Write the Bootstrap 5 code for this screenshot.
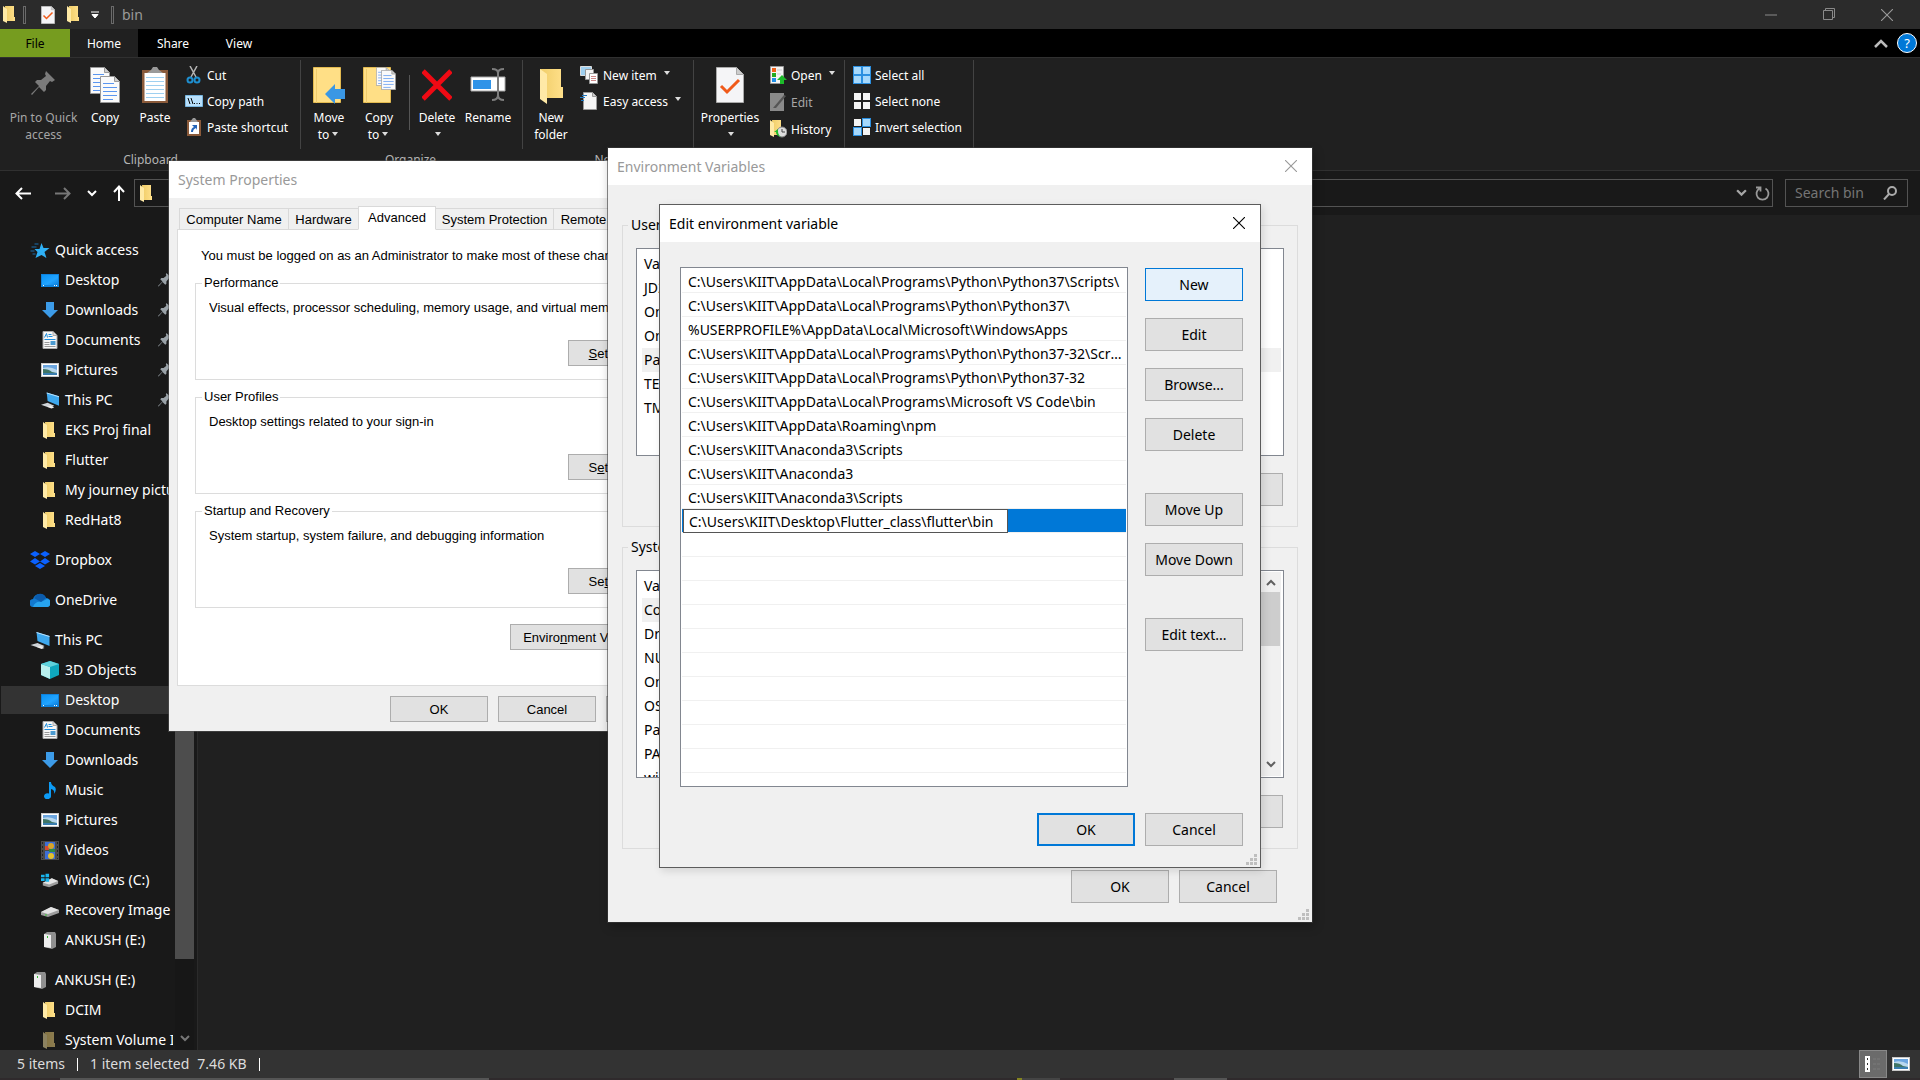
<!DOCTYPE html>
<html lang="en">
<head>
<meta charset="utf-8">
<meta name="viewport" content="width=device-width, initial-scale=1">
<title>bin</title>
<link rel="stylesheet" href="https://cdn.jsdelivr.net/npm/bootstrap@5.3.0/dist/css/bootstrap.min.css">
<style>
body{font-family:"Noto Sans","Open Sans",sans-serif;font-size:14px;line-height:20px;background:#202020;color:#fff;height:100vh;overflow:hidden}
a{color:inherit;text-decoration:none}
button{background:none;border:0;padding:0;color:inherit}
svg{display:block;flex:none}
main{flex:1 1 0;min-height:0}
/* title bar */
.titlebar{height:29px;background:#2b2b2b;color:#9a9a9a}
.bar{width:3px;height:18px;border:1px solid #6a6a6a}
.ctl{width:58px;height:29px;display:flex;align-items:center;justify-content:center}
.qa{gap:12px;padding:0 12px 0 15px}
/* ribbon */
.tabs{height:28px;background:#000;font-size:12px}
.tabs a{height:28px;line-height:29px;text-align:center;width:70px}
.tabs .t-file{background:#769c1f;color:#000}
.tabs .t-home{background:#202020;width:68px}
.tabs .t-view{width:62px}
.collapse-btn{color:#bbb}
.help-btn{width:20px;height:20px;line-height:16px;border-radius:50%;border:1px solid #fff;background:#0078d7;color:#fff;font-size:13px;margin:0 3px 0 9px}
.ribbon{border-top:1px solid #303030;border-bottom:1px solid #303030;height:114px;font-size:12px;line-height:17px}
.grp{display:flex;flex-direction:column;position:relative;padding-top:4px}
.grp::after{content:"";position:absolute;right:0;top:2px;height:89px;border-right:1px solid #434343}
.grp-name{color:#b4b4b4;text-align:center;margin-top:auto;padding:0 6px 2px 0}
.big{width:50px;display:flex;flex-direction:column;align-items:center;padding-top:5px}
.big .ico{height:42px;display:flex;align-items:flex-start}
.w75{width:75px}.w64{width:64px}.w52{width:52px}.w48{width:48px}
.sm{display:flex;align-items:center;height:26px;gap:4px;white-space:nowrap}
.g1{gap:1px}
.off{color:#a6a6a6}
.dd{display:inline-block;border:4px solid transparent;border-top-color:#ddd;border-bottom:0;border-left-width:3px;border-right-width:3px;vertical-align:middle;margin:0 2px 4px 3px}
.g-clip{width:301px;padding-left:6px}.g-org{width:222px;padding-left:3px}.g-new{width:171px;padding-left:3px}.g-open{width:151px;padding-left:4px}.g-sel{width:129px;padding-left:8px}
.vsep{width:1px;height:55px;background:#555;margin:13px 2px 0 5px}
/* address row */
.addr{height:44px;background:#191919;padding:0 12px 0 3px}
.addr-box{height:28px;border:1px solid #535353;background:#191919}
.path-box{padding:0 2px 0 5px;margin:0 12px 0 9px}
.nav-ic{width:40px;display:flex;justify-content:center}
.search input{background:none;border:0;outline:0;color:#fff;width:88px;padding:0;line-height:20px}
.search input::placeholder{color:#757575;opacity:1}
.search{width:123px;padding-left:9px}
/* navigation tree */
.side{width:198px;background:#191919;border-right:1px solid #2b2b2b}
.tree{width:175px;padding:20px 2px 0 1px;overflow:hidden}
.tree ul{list-style:none;margin:0 0 10px;padding:0}
.tree li{padding:1px 0}
.tree a{display:flex;align-items:center;height:28px;padding-left:40px;white-space:nowrap;overflow:hidden;gap:6px}
.tree li.root a{padding-left:29px;gap:5px}
.tree a.sel{background:#333}
.tree svg.pin{margin-left:auto;margin-right:1px;color:#9aa2a8}
.sbar{width:19px;background:#171717}
.sthumb{height:744px;background:#4d4d4d}
.status{height:28px;background:#333;color:#dcdcdc;padding-left:17px}
.tick{width:1px;height:13px;background:#fff;margin:0 12px}
.vbtn{width:28px;height:28px;background:#6b6b6b;border:1px solid #888}
.views{gap:5px;margin-right:10px}
.tb{height:2px;background:#2f2a2c}
/* windows */
.win{position:absolute;background:#f0f0f0;color:#000;box-shadow:0 0 0 1px rgba(85,85,85,.55)}
.win-title{background:#fff;height:37px;padding:0 15px 0 9px;color:#999}
.win-title button{padding-bottom:1px}
.win-sys{left:169px;top:161px;width:544px;font-family:"Liberation Sans",Arial,sans-serif;font-size:13px}
.win-sys .win-title{font-family:"Noto Sans",sans-serif;font-size:14px}
.win-env{left:608px;top:148px;width:704px;box-shadow:0 0 0 1px rgba(60,60,60,.6),2px 4px 10px rgba(0,0,0,.3)}
.win-edit{left:659px;top:204px;width:602px;border:1px solid #5c5c5c;box-shadow:2px 3px 8px rgba(0,0,0,.12)}
.wbtn{background:#e1e1e1;border:1px solid #adadad;height:33px;width:98px;color:#000}
.win-sys .wbtn{height:26px;padding-top:1px}
.wbtn.hot{background:#e5f1fb;border-color:#0078d7}
.wbtn.def{border:2px solid #0078d7}
.foot{gap:10px}
.box{border:1px solid #dcdcdc;margin:0;min-width:0}
.box legend{float:none;width:auto;font-size:inherit;margin:0}
.sys-body{padding:8px 9px 9px 8px}
.sys-body .foot{margin-top:10px}
.stabs{height:24px;padding-left:2px}
.stabs button{height:22px;border:1px solid #d9d9d9;border-left-width:0;background:#f0f0f0;white-space:nowrap;padding-top:1px}
.stabs button:first-child{border-left-width:1px}
.stabs button.on{height:24px;background:#fff;border-bottom-color:#fff;border-left:1px solid #d9d9d9;position:relative;padding-bottom:2px;margin-left:-1px}
.tw1{width:110px}.tw2{width:70px}.tw3{width:78px}.tw4{width:118px}.tw5{width:60px}
.pane{background:#fff;border:1px solid #dcdcdc;margin-top:-1px;padding:16px 17px 35px}
.pane .lead-in{margin:0 0 9px 6px;white-space:nowrap;overflow:hidden}
.pane .box{padding:7px 18px 13px 13px;margin-bottom:9px}
.pane .box legend{line-height:16px;margin-left:-7px;padding:0 2px}
.pane p{margin:0 0 22px;white-space:nowrap;overflow:hidden}
.pane .box .wbtn{width:99px}
.pane .envbtn{width:167px;margin:7px 9px 0 0}
.env-body{padding:30px 14px 19px}
.env-body .box{padding:13px 14px 20px 13px;margin-bottom:10px}
.env-body .box legend{line-height:20px;margin-left:-8px;padding:0 3px;white-space:nowrap}
.vlist{height:208px;background:#fff;border:1px solid #828790;padding:3px 2px 1px 5px;margin:0 -1px 17px 0;overflow:hidden;position:relative}
.vlist table{width:100%;line-height:24px}
.vlist th,.vlist td{padding:0 2px;font-weight:400;height:24px}
.vlist tr.sel td{background:#f0f0f0}
.vscroll{position:absolute;right:2px;top:1px;bottom:1px;width:20px;background:#f0f0f0;padding:7px 1px 8px 0;color:#606060}
.vthumb{height:54px;background:#cdcdcd;margin-top:6px}
.flip{transform:rotate(180deg)}
.env-foot{padding:11px 21px 0 0}
.grip{position:absolute;right:3px;bottom:2px}
.edit-body{padding:25px 17px 21px 20px}
.edit-body .foot{margin-top:26px}
.plist{width:448px;height:520px;background:#fff;border:1px solid #828790;padding:1px;list-style:none;margin:0;overflow:hidden}
.plist li{height:24px;line-height:25px;border-bottom:1px solid #f0f0f0;padding:0 3px 0 6px;white-space:nowrap;overflow:hidden;text-overflow:ellipsis}
.plist li.sel{background:#0078d7;padding:0 0 0 1px;display:flex;overflow:visible}
.plist input{width:325px;height:24px;border:1px solid #555;background:#fff;padding:0 4px 0 5px;outline:0;color:#000;flex:none}
.side-btns{gap:17px;padding-top:1px}
.sp25{margin-top:25px}
</style>
<script src="https://cdn.jsdelivr.net/npm/bootstrap@5.3.0/dist/js/bootstrap.bundle.min.js"></script>
</head>
<body class="d-flex flex-column">
<svg width="0" height="0" class="position-absolute">
<defs>
<linearGradient id="gf" x1="0" x2="1"><stop offset="0" stop-color="#f0cd68"/><stop offset="1" stop-color="#ffe08a"/></linearGradient>
<linearGradient id="gd" x1="0" y1="0" x2="1" y2="1"><stop offset="0" stop-color="#0a93f5"/><stop offset=".6" stop-color="#22a4ff"/><stop offset="1" stop-color="#0d7fdc"/></linearGradient>
<symbol id="folder" viewBox="0 0 12 17"><path d="M2 0h9v11h1v4H3z" fill="url(#gf)"/><path d="M0 0l4 3v14l-4-2z" fill="#ffeaa6"/></symbol>
<symbol id="pin" viewBox="0 0 25 25"><path d="M15 0l9 9-3 2-2-1-4 5 0 4-2 2-5-5-7 8-1-1 8-8-4-4 2-2h4l5-4-1-2z" fill="currentColor"/></symbol>
<symbol id="star" viewBox="0 0 19 15"><path d="M11 0l2 5h6l-5 4 2 6-5-3-6 3 2-6-3-3h5z" fill="#2fb0f5"/><path d="M4 1h4M1 4h5M0 8h4M2 11h3" stroke="#1b6fae" stroke-width="1"/></symbol>
<symbol id="desk" viewBox="0 0 18 13"><path d="M0 0h18v13H0z" fill="#0f82dc"/><path d="M1 1h16v10H1z" fill="url(#gd)"/><path d="M2 11.500h1M13 11.500h1M15 11.500h1" stroke="#fff"/></symbol>
<symbol id="down" viewBox="0 0 16 16"><path d="M4 0h8v8h4l-8 8-8-8h4z" fill="#3c9be8"/></symbol>
<symbol id="doc" viewBox="0 0 15 18"><path d="M.5.5h10l4 4v13H.5z" fill="#f7f7f7" stroke="#aaa"/><path d="M10.500.5v4h4" fill="#ddd" stroke="#aaa"/><path d="M2 6.500L4 2.500 5 6.500M6 3.500h3M6 5.500h4M2 8.500h11" stroke="#1d8ede" fill="none"/><path d="M2 11.500h5M2 13.500h5M2 15.500h11" stroke="#999"/><path d="M8 10h5v4H8z" fill="#4a9ad0"/></symbol>
<symbol id="pic" viewBox="0 0 18 14"><path d="M0 0h18v14H0z" fill="#c8c8c8"/><path d="M1 1h16v12H1z" fill="#fff"/><path d="M2 2h14v10H2z" fill="#6ca6e0"/><path d="M2 5q7-2 14 2v5H2z" fill="#b9d8ee"/><path d="M2 6q6 0 9 3l5 1v1H2z" fill="#3f7566"/><path d="M2 10h14v2H2z" fill="#3a7eb0"/></symbol>
<symbol id="pc" viewBox="0 0 19 17"><path d="M6 0l13 4v10L7 9z" fill="#3ea8ee"/><path d="M6 0l13 4v1L6 1z" fill="#bde2fa"/><path d="M0 13l7-2 7 3-3 2-5-1z" fill="#cfd4d8"/><path d="M6 15l4-1 4 2-3 1z" fill="#eee"/></symbol>
<symbol id="dropbox" viewBox="0 0 20 18"><path d="M5 0l5 3-5 3-5-3zM15 0l5 3-5 3-5-3zM5 7l5 3.500-5 3-5-3zM15 7l5 3.500-5 3-5-3zM10 12l5 3-5 3-5-3z" fill="#0b61fe"/></symbol>
<symbol id="cloud" viewBox="0 0 20 14"><path d="M4 14a4 4 0 0 1-1-8 7 7 0 0 1 13-1 4.500 4.500 0 0 1 0 9z" fill="#1279cf"/><path d="M3 14c1-4 5-6 8-5l6-3a4 4 0 0 1-1 8z" fill="#27a3ee"/><path d="M5 4a6 6 0 0 1 11 1l-5 4-7-4z" fill="#0b5cad"/></symbol>
<symbol id="cube" viewBox="0 0 18 18"><path d="M9 0l9 3v11l-9 4-9-4V3z" fill="#0fa7bd"/><path d="M0 3l9 3v12l-9-4z" fill="#b8f0ee"/><path d="M0 3l9-3 9 3-9 3z" fill="#5fd2dc"/></symbol>
<symbol id="note" viewBox="0 0 12 17"><path d="M5 0h2q0 3 4 5 2 3-1 7 1-4-3-5v7a3.500 3 0 1 1-2-2.500z" fill="#0c9bf5"/></symbol>
<symbol id="film" viewBox="0 0 18 19"><path d="M0 0h18v19H0z" fill="#4b4b4b"/><path d="M4 1h10v8H4zM4 10h10v8H4z" fill="#3d6fd6"/><path d="M4 5h4v4H4z" fill="#d44b35"/><circle cx="10" cy="5" r="3" fill="#d9a52a"/><circle cx="10" cy="15" r="3" fill="#e3c02d"/><path d="M8 8h6v3H8z" fill="#2c8a42"/><path d="M1.500 1v17M16.500 1v17" stroke="#222" stroke-dasharray="2 2"/></symbol>
<symbol id="drive" viewBox="0 0 18 10"><path d="M0 5l10-5 8 3v3L7 10 0 8z" fill="#9c9c9c"/><path d="M0 5l10-5 8 3L7 7z" fill="#e3e3e3"/><path d="M4 8h2" stroke="#3c3"/></symbol>
<symbol id="cdrive" viewBox="0 0 20 15"><path d="M2 10l10-5 7 3v3L9 15l-7-2z" fill="#9c9c9c"/><path d="M2 10l10-5 7 3L9 12z" fill="#e3e3e3"/><path d="M0 1h4v3H0zM5 0h4v4H5zM0 5h4v3H0zM5 5h4v4H5z" fill="#19b5ee"/></symbol>
<symbol id="usb" viewBox="0 0 12 17"><path d="M0 2l3-2h8l1 2v13l-4 2-8-2z" fill="#8f8f8f"/><path d="M0 2l7 1v13l-7-1z" fill="#ededed"/><path d="M3 4h1v2H3z" fill="#3b3"/></symbol>
<symbol id="check" viewBox="0 0 28 36"><path d="M.5.5h20l7 7v28H.5z" fill="#f5f5f7" stroke="#aaa"/><path d="M20.500.5v7h7" fill="#ccc" stroke="#aaa"/><path d="M5 19l6 6L23 13" fill="none" stroke="#f05a1a" stroke-width="3"/></symbol>
<symbol id="page" viewBox="0 0 20 27"><path d="M.5.5h14l5 5v21H.5z" fill="#fafafa" stroke="#999"/><path d="M14.500.5v5h5" fill="#ccc" stroke="#999"/><path d="M3 7.500h11M3 11.500h14M3 15.500h14M3 19.500h14M3 23.500h10" stroke="#5a96f0"/></symbol>
<symbol id="x" viewBox="0 0 12 12"><path d="M0 0l12 12M12 0L0 12" stroke="currentColor" stroke-width="1.100"/></symbol>
<symbol id="chev" viewBox="0 0 10 7"><path d="M1 1l4 4 4-4" fill="none" stroke="currentColor" stroke-width="2"/></symbol>
<symbol id="gripper" viewBox="0 0 11 11"><path d="M8 0h3v3H8zM4 4h3v3H4zM8 4h3v3H8zM0 8h3v3H0zM4 8h3v3H4zM8 8h3v3H8z" fill="#bfbfbf"/></symbol>
<symbol id="bigfolder" viewBox="0 0 28 36"><path d="M.5.5h27v35H.5z" fill="#ffdf86" stroke="#e3ba50"/><path d="M3.500 2v34" stroke="#efcb6c"/></symbol>
</defs>
</svg>

<header class="titlebar d-flex align-items-center flex-shrink-0">
  <svg class="me-2" style="margin-left:3px" width="12" height="17"><use href="#folder"/></svg>
  <span class="bar"></span>
  <div class="qa d-flex align-items-center">
    <button aria-label="Properties"><svg width="14" height="18"><use href="#check"/></svg></button>
    <button aria-label="New folder"><svg width="12" height="17"><use href="#folder"/></svg></button>
    <button aria-label="Customize"><svg width="8" height="8"><path d="M0 1h8M1 3.500h6L4 7z" stroke="#fff" fill="#fff"/></svg></button>
  </div>
  <span class="bar me-2"></span>
  <span>bin</span>
  <div class="d-flex ms-auto me-1">
    <button class="ctl" aria-label="Minimize"><svg width="12" height="2"><path d="M0 1h12" stroke="#8a8a8a"/></svg></button>
    <button class="ctl" aria-label="Restore"><svg width="13" height="13"><path d="M.5 2.500h9v9h-9zM2.500 2.500v-2h9v9h-2" stroke="#8a8a8a" fill="none"/></svg></button>
    <button class="ctl" aria-label="Close"><svg width="12" height="12"><use href="#x"/></svg></button>
  </div>
</header>

<nav class="tabs d-flex align-items-center flex-shrink-0">
  <a href="#" class="t-file">File</a><a href="#" class="t-home">Home</a><a href="#">Share</a><a href="#" class="t-view">View</a>
  <button class="ms-auto collapse-btn" aria-label="Collapse ribbon"><svg width="14" height="9" viewBox="0 0 14 9"><path d="M1 8l6-6 6 6" fill="none" stroke="currentColor" stroke-width="2.500"/></svg></button>
  <button aria-label="Help" class="help-btn">?</button>
</nav>

<section class="ribbon d-flex flex-shrink-0">
  <div class="grp g-clip">
    <div class="d-flex">
      <button class="big w75 off"><span class="ico"><svg width="25" height="25" class="mt-1" style="color:#7b7b7b"><use href="#pin"/></svg></span>Pin to Quick access</button>
      <button class="big w48"><span class="ico"><svg width="30" height="36"><use href="#page" width="20" height="27"/><use href="#page" x="10" y="9" width="20" height="27"/></svg></span>Copy</button>
      <button class="big w52"><span class="ico"><svg width="26" height="36"><path d="M0 3h26v33H0z" fill="#8a5a3a"/><path d="M2.500 6h21v28h-21z" fill="#fff"/><path d="M4 10.500h18M4 14.500h18M4 18.500h18M4 22.500h18M4 26.500h18M4 30.500h18" stroke="#9fd0f0"/><path d="M5 6l4-3 2-3h4l2 3 4 3z" fill="#9a9a9a"/></svg></span>Paste</button>
      <div class="ps-1">
        <button class="sm"><svg width="18" height="18"><path d="M5 0l6 11M12 0L6 11" stroke="#b5b5b5" stroke-width="1.500"/><circle cx="5" cy="14" r="2.500" fill="none" stroke="#1e8fd0" stroke-width="2"/><circle cx="12" cy="14" r="2.500" fill="none" stroke="#1e8fd0" stroke-width="2"/></svg>Cut</button>
        <button class="sm"><svg width="18" height="12"><path d="M.5.5h17v11H.5z" fill="#b9e0fb" stroke="#78b6e0"/><path d="M3 3l2 6M6 3l2 6M9 8.500h1M11.500 8.500h1M14 8.500h1" stroke="#000"/></svg>Copy path</button>
        <button class="sm"><svg width="18" height="18"><path d="M2 2h14v16H2z" fill="#8a5a3a"/><path d="M4 4h10v12H4z" fill="#fff"/><path d="M5 4l3-4h2l3 4z" fill="#999"/><path d="M6 14q0-4 3-5L7 7h5v5l-1-2q-3 1-3 4z" fill="#2464b8"/></svg>Paste shortcut</button>
      </div>
    </div>
    <div class="grp-name">Clipboard</div>
  </div>
  <div class="grp g-org">
    <div class="d-flex">
      <button class="big"><span class="ico"><svg width="33" height="37"><use href="#bigfolder" width="28" height="36"/><path d="M12 27l10-10v5h10v10H22v5z" fill="#3a97e4"/></svg></span>Move<span>to<i class="dd"></i></span></button>
      <button class="big"><span class="ico"><svg width="33" height="37"><use href="#bigfolder" width="28" height="36"/><use href="#page" x="13" width="14" height="19"/><use href="#page" x="18" y="3" width="15" height="20"/></svg></span>Copy<span>to<i class="dd"></i></span></button>
      <span class="vsep"></span>
      <button class="big"><span class="ico"><svg width="30" height="36"><path d="M1 4l28 28M29 4L1 32" stroke="#f00a14" stroke-width="5"/></svg></span>Delete<span><i class="dd"></i></span></button>
      <button class="big w52"><span class="ico"><svg width="37" height="36"><path d="M1 10h34v14H1z" fill="#fff" stroke="#aaa"/><path d="M3 13h18v9H3z" fill="#2f93e8"/><path d="M22 2q6 0 6 4v22q0 5-6 5M34 2q-6 0-6 4v22q0 5 6 5" fill="none" stroke="#7d7d7d" stroke-width="2"/></svg></span>Rename</button>
    </div>
    <div class="grp-name">Organize</div>
  </div>
  <div class="grp g-new">
    <div class="d-flex">
      <button class="big"><span class="ico"><svg width="24" height="37"><path d="M1 2h21v18h2v11H8L1 32z" fill="url(#gf)"/><path d="M1 2l7 5v30l-7-5z" fill="#ffe9a6"/></svg></span>New folder</button>
      <div class="ps-1">
        <button class="sm"><svg width="19" height="18"><path d="M.5.5h11v9H.5z" fill="#9fd0f0" stroke="#ddd"/><path d="M5.500 3.500h8v10h-8z" fill="#f4f4f4" stroke="#999"/><path d="M9.500 7.500h8v10h-8z" fill="#fff" stroke="#999"/><path d="M11 10.500h5M11 12.500h5M11 14.500h5" stroke="#c88"/></svg>New item<i class="dd"></i></button>
        <button class="sm"><svg width="19" height="18"><path d="M3.500.5h9l4 4v13h-13z" fill="#f4f4f4" stroke="#999"/><path d="M12.500.5v4h4" fill="#ccc" stroke="#999"/><path d="M2 3.500h5M0 5.500h5M1 8.500h3" stroke="#1f78c0"/></svg>Easy access<i class="dd"></i></button>
      </div>
    </div>
    <div class="grp-name">New</div>
  </div>
  <div class="grp g-open">
    <div class="d-flex">
      <button class="big w64"><span class="ico"><svg width="28" height="36"><use href="#check"/></svg></span>Properties<span><i class="dd"></i></span></button>
      <div class="d-flex flex-column g1 ps-2">
        <button class="sm"><svg width="17" height="18"><path d="M.5.5h13v17H.5z" fill="#f4f4f4" stroke="#999"/><path d="M2 2h4v4H2z" fill="#f0601a"/><path d="M2 7h4v4H2z" fill="#2a2"/><path d="M2 12h4v4H2z" fill="#1e8fe8"/><path d="M7 4h5M7 8h4" stroke="#ccc"/><path d="M7 14l5-5 5 5h-3v4h-4v-4z" fill="#1dbb2a"/></svg>Open<i class="dd"></i></button>
        <button class="sm off"><svg width="17" height="18"><path d="M0 0h14v18H0z" fill="#8a8a8a"/><path d="M3 15L14 2l2 1L6 15z" fill="#555"/></svg>Edit</button>
        <button class="sm"><svg width="17" height="18"><use href="#folder" width="12" height="17"/><circle cx="12" cy="12" r="5" fill="#ddd" stroke="#888"/><path d="M12 9v3h3" fill="none" stroke="#444"/><path d="M4 12l4-3v2q0 4 3 6-5-1-5-5z" fill="#1dbb2a"/></svg>History</button>
      </div>
    </div>
    <div class="grp-name">Open</div>
  </div>
  <div class="grp g-sel">
    <div>
      <button class="sm"><svg width="18" height="18"><path d="M0 0h18v18H0z" fill="#2b8fe0"/><path d="M1 1h7v7H1zM10 1h7v7h-7zM1 10h7v7H1zM10 10h7v7h-7z" fill="#a5d8fc"/></svg>Select all</button>
      <button class="sm"><svg width="18" height="18"><path d="M1 1h7v7H1zM10 1h7v7h-7zM1 10h7v7H1zM10 10h7v7h-7z" fill="#f4f4f4"/></svg>Select none</button>
      <button class="sm"><svg width="18" height="18"><path d="M9 0h9v9H9zM0 9h9v9H0z" fill="#2b8fe0"/><path d="M10 1h7v7h-7zM1 10h7v7H1z" fill="#a5d8fc"/><path d="M1 1h7v7H1zM10 10h7v7h-7z" fill="#f4f4f4"/></svg>Invert selection</button>
    </div>
    <div class="grp-name">Select</div>
  </div>
</section>

<section class="addr d-flex align-items-center flex-shrink-0">
  <button class="nav-ic" aria-label="Back"><svg width="16" height="13"><path d="M1 6.500h15M7 1L1.500 6.500 7 12" stroke="#fff" stroke-width="2" fill="none"/></svg></button>
  <button class="nav-ic" aria-label="Forward"><svg width="16" height="13"><path d="M0 6.500h15M9 1l5.500 5.500L9 12" stroke="#777" stroke-width="2" fill="none"/></svg></button>
  <button class="ms-1 me-3" aria-label="Recent"><svg width="10" height="7"><use href="#chev"/></svg></button>
  <button aria-label="Up"><svg width="12" height="16"><path d="M6 1v15M1 7l5-5.500L11 7" stroke="#fff" stroke-width="2" fill="none"/></svg></button>
  <div class="addr-box path-box d-flex flex-fill align-items-center">
    <svg class="me-3" width="12" height="17"><use href="#folder"/></svg>
    <svg width="6" height="10"><path d="M1 1l4 4-4 4" stroke="#888" fill="none"/></svg>
    <button class="ms-auto me-2 off" aria-label="History"><svg width="11" height="8" viewBox="0 0 10 7"><use href="#chev"/></svg></button>
    <button aria-label="Refresh"><svg width="15" height="15"><path d="M4.500 2.500a6 6 0 1 0 6 0M1 1.500h4.500v4" stroke="#999" stroke-width="1.800" fill="none"/></svg></button>
  </div>
  <div class="addr-box search d-flex align-items-center">
    <input type="search" aria-label="Search bin" placeholder="Search bin">
    <svg width="14" height="14"><circle cx="9" cy="5" r="4" fill="none" stroke="#aaa" stroke-width="2"/><path d="M6 8l-5 5.500" stroke="#aaa" stroke-width="2"/></svg>
  </div>
</section>

<main class="d-flex overflow-hidden">
  <div class="side d-flex flex-shrink-0">
    <nav class="tree">
      <ul>
        <li class="root"><a href="#"><svg width="20" height="15"><use href="#star"/></svg>Quick access</a></li>
        <li><a href="#"><svg width="18" height="13"><use href="#desk"/></svg>Desktop<svg class="pin" width="14" height="14"><use href="#pin"/></svg></a></li>
        <li><a href="#"><svg width="18" height="16"><use href="#down"/></svg>Downloads<svg class="pin" width="14" height="14"><use href="#pin"/></svg></a></li>
        <li><a href="#"><svg width="18" height="18"><use href="#doc"/></svg>Documents<svg class="pin" width="14" height="14"><use href="#pin"/></svg></a></li>
        <li><a href="#"><svg width="18" height="14"><use href="#pic"/></svg>Pictures<svg class="pin" width="14" height="14"><use href="#pin"/></svg></a></li>
        <li><a href="#"><svg width="18" height="17"><use href="#pc"/></svg>This PC<svg class="pin" width="14" height="14"><use href="#pin"/></svg></a></li>
        <li><a href="#"><svg width="18" height="17"><use href="#folder" x="2" width="12"/></svg>EKS Proj final</a></li>
        <li><a href="#"><svg width="18" height="17"><use href="#folder" x="2" width="12"/></svg>Flutter</a></li>
        <li><a href="#"><svg width="18" height="17"><use href="#folder" x="2" width="12"/></svg>My journey pictures</a></li>
        <li><a href="#"><svg width="18" height="17"><use href="#folder" x="2" width="12"/></svg>RedHat8</a></li>
      </ul>
      <ul><li class="root"><a href="#"><svg width="20" height="18"><use href="#dropbox"/></svg>Dropbox</a></li></ul>
      <ul><li class="root"><a href="#"><svg width="20" height="14"><use href="#cloud"/></svg>OneDrive</a></li></ul>
      <ul>
        <li class="root"><a href="#"><svg width="20" height="17"><use href="#pc"/></svg>This PC</a></li>
        <li><a href="#"><svg width="18" height="18"><use href="#cube"/></svg>3D Objects</a></li>
        <li><a href="#" class="sel"><svg width="18" height="13"><use href="#desk"/></svg>Desktop</a></li>
        <li><a href="#"><svg width="18" height="18"><use href="#doc"/></svg>Documents</a></li>
        <li><a href="#"><svg width="18" height="16"><use href="#down"/></svg>Downloads</a></li>
        <li><a href="#"><svg width="18" height="17"><use href="#note"/></svg>Music</a></li>
        <li><a href="#"><svg width="18" height="14"><use href="#pic"/></svg>Pictures</a></li>
        <li><a href="#"><svg width="18" height="19"><use href="#film"/></svg>Videos</a></li>
        <li><a href="#"><svg width="18" height="15"><use href="#cdrive"/></svg>Windows (C:)</a></li>
        <li><a href="#"><svg width="18" height="10" class="mt-1"><use href="#drive"/></svg>Recovery Image (D:)</a></li>
        <li><a href="#"><svg width="18" height="17"><use href="#usb"/></svg>ANKUSH (E:)</a></li>
      </ul>
      <ul>
        <li class="root"><a href="#"><svg width="20" height="17"><use href="#usb"/></svg>ANKUSH (E:)</a></li>
        <li><a href="#"><svg width="18" height="17"><use href="#folder" x="2" width="12"/></svg>DCIM</a></li>
        <li><a href="#"><svg width="18" height="17" opacity=".5"><use href="#folder" x="2" width="12"/></svg>System Volume Information</a></li>
      </ul>
    </nav>
    <div class="sbar d-flex flex-column">
      <div class="sthumb"></div>
      <svg width="10" height="7" class="mx-auto mt-auto mb-2" style="color:#777"><use href="#chev"/></svg>
    </div>
  </div>
</main>

<footer class="status d-flex align-items-center flex-shrink-0">
  <span>5 items</span><span class="tick"></span><span class="me-2">1 item selected</span><span>7.46 KB</span><span class="tick"></span>
  <div class="views d-flex ms-auto align-items-center">
    <button class="vbtn d-flex align-items-center justify-content-center" aria-label="Details"><svg width="16" height="16"><path d="M0 0h5v16H0z" fill="#fff"/><path d="M2 3h1M2 8h1M2 13h1" stroke="#333" stroke-width="2"/><path d="M8 3h3M12 3h3M8 8h3M12 8h3M8 13h3M12 13h3" stroke="#7c7c7c"/></svg></button>
    <button aria-label="Large icons"><svg width="18" height="14"><use href="#pic"/></svg></button>
  </div>
</footer>
<div class="tb flex-shrink-0"><svg width="1230" height="2"><path d="M60 0h429v2H60zM1174 0h53v2h-53z" fill="#555"/><path d="M1017 0h5v2h-5z" fill="#84841f"/><path d="M1022 0h38v2h-38z" fill="#444"/></svg></div>

<section class="win win-sys" aria-label="System Properties">
  <div class="win-title d-flex align-items-center">System Properties</div>
  <div class="sys-body">
    <div class="stabs d-flex align-items-end">
      <button class="tw1">Computer Name</button><button class="tw2">Hardware</button><button class="tw3 on">Advanced</button><button class="tw4">System Protection</button><button class="tw5">Remote</button>
    </div>
    <div class="pane">
      <div class="lead-in">You must be logged on as an Administrator to make most of these changes.</div>
      <fieldset class="box"><legend>Performance</legend><p>Visual effects, processor scheduling, memory usage, and virtual memory</p><div class="text-end"><button class="wbtn"><u>S</u>ettings...</button></div></fieldset>
      <fieldset class="box"><legend>User Profiles</legend><p>Desktop settings related to your sign-in</p><div class="text-end"><button class="wbtn">S<u>e</u>ttings...</button></div></fieldset>
      <fieldset class="box"><legend>Startup and Recovery</legend><p>System startup, system failure, and debugging information</p><div class="text-end"><button class="wbtn">Se<u>t</u>tings...</button></div></fieldset>
      <div class="d-flex justify-content-end"><button class="wbtn envbtn">Enviro<u>n</u>ment Variables...</button></div>
    </div>
    <div class="foot d-flex justify-content-end"><button class="wbtn">OK</button><button class="wbtn">Cancel</button><button class="wbtn">Apply</button></div>
  </div>
</section>

<section class="win win-env" aria-label="Environment Variables">
  <div class="win-title d-flex align-items-center justify-content-between">Environment Variables<button aria-label="Close"><svg width="12" height="12"><use href="#x"/></svg></button></div>
  <div class="env-body">
    <fieldset class="box"><legend>User variables for KIIT</legend>
      <div class="vlist"><table><thead><tr><th>Variable</th></tr></thead><tbody>
        <tr><td>JD2_HOME</td></tr><tr><td>OneDrive</td></tr><tr><td>OneDriveConsumer</td></tr><tr class="sel"><td>Path</td></tr><tr><td>TEMP</td></tr><tr><td>TMP</td></tr></tbody></table></div>
      <div class="d-flex justify-content-end"><button class="wbtn">Delete</button></div>
    </fieldset>
    <fieldset class="box"><legend>System variables</legend>
      <div class="vlist"><table><thead><tr><th>Variable</th></tr></thead><tbody>
        <tr class="sel"><td>ComSpec</td></tr><tr><td>DriverData</td></tr><tr><td>NUMBER_OF_PROCESSORS</td></tr><tr><td>OnlineServices</td></tr><tr><td>OS</td></tr><tr><td>Path</td></tr><tr><td>PATHEXT</td></tr><tr><td>windir</td></tr></tbody></table>
        <div class="vscroll d-flex flex-column"><svg width="10" height="7" class="mx-auto flip"><use href="#chev"/></svg><div class="vthumb"></div><svg width="10" height="7" class="mx-auto mt-auto"><use href="#chev"/></svg></div>
      </div>
      <div class="d-flex justify-content-end"><button class="wbtn">Delete</button></div>
    </fieldset>
    <div class="env-foot foot d-flex justify-content-end"><button class="wbtn">OK</button><button class="wbtn">Cancel</button></div>
  </div>
  <svg class="grip" width="11" height="11"><use href="#gripper"/></svg>
</section>

<section class="win win-edit" aria-label="Edit environment variable">
  <div class="win-title d-flex align-items-center justify-content-between text-black">Edit environment variable<button aria-label="Close"><svg width="12" height="12"><use href="#x"/></svg></button></div>
  <div class="edit-body">
    <div class="d-flex justify-content-between">
      <ul class="plist">
        <li>C:\Users\KIIT\AppData\Local\Programs\Python\Python37\Scripts\</li>
        <li>C:\Users\KIIT\AppData\Local\Programs\Python\Python37\</li>
        <li>%USERPROFILE%\AppData\Local\Microsoft\WindowsApps</li>
        <li>C:\Users\KIIT\AppData\Local\Programs\Python\Python37-32\Scripts</li>
        <li>C:\Users\KIIT\AppData\Local\Programs\Python\Python37-32</li>
        <li>C:\Users\KIIT\AppData\Local\Programs\Microsoft VS Code\bin</li>
        <li>C:\Users\KIIT\AppData\Roaming\npm</li>
        <li>C:\Users\KIIT\Anaconda3\Scripts</li>
        <li>C:\Users\KIIT\Anaconda3</li>
        <li>C:\Users\KIIT\Anaconda3\Scripts</li>
        <li class="sel"><input type="text" aria-label="Path entry" value="C:\Users\KIIT\Desktop\Flutter_class\flutter\bin"></li>
        <li></li><li></li><li></li><li></li><li></li><li></li><li></li><li></li><li></li><li></li>
      </ul>
      <div class="side-btns d-flex flex-column">
        <button class="wbtn hot">New</button><button class="wbtn">Edit</button><button class="wbtn">Browse...</button><button class="wbtn">Delete</button>
        <button class="wbtn sp25">Move Up</button><button class="wbtn">Move Down</button>
        <button class="wbtn sp25">Edit text...</button>
      </div>
    </div>
    <div class="foot d-flex justify-content-end"><button class="wbtn def">OK</button><button class="wbtn">Cancel</button></div>
  </div>
  <svg class="grip" width="11" height="11"><use href="#gripper"/></svg>
</section>
</body>
</html>
